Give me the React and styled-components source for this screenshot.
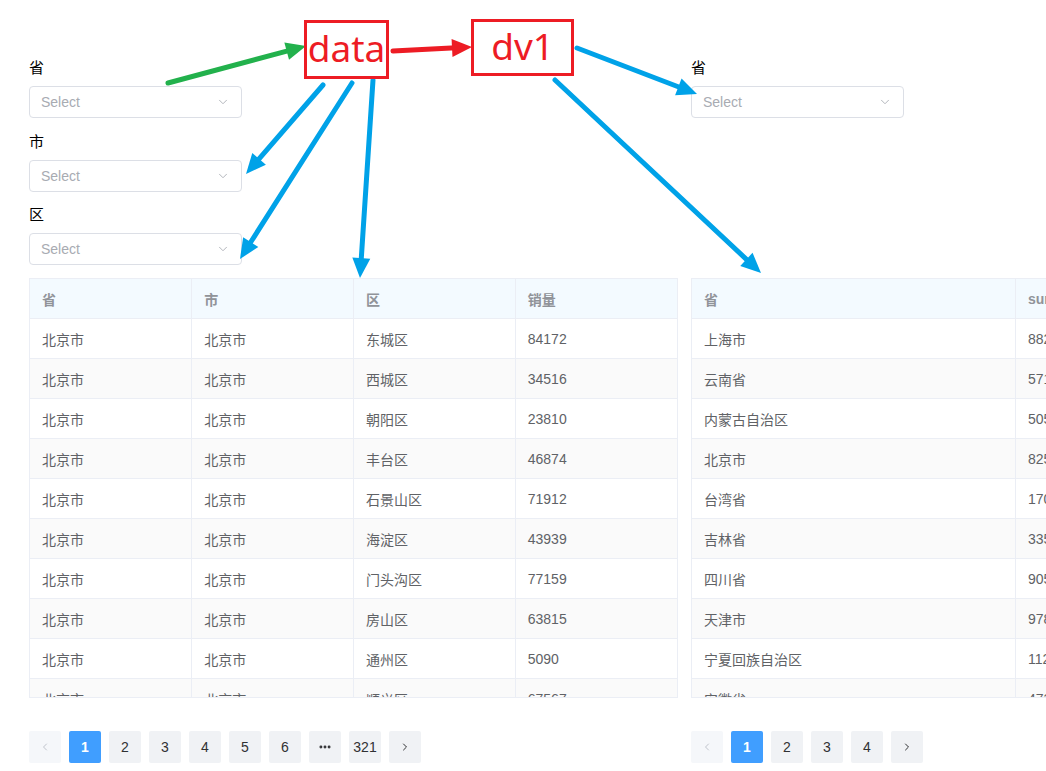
import React from 'react'
import styled, { createGlobalStyle } from 'styled-components'
import { ChevronDown, ChevronLeft, ChevronRight, Ellipsis } from 'lucide-react'

const GlobalStyle = createGlobalStyle`
    html, body {
        margin: 0;
        padding: 0;
        background: #ffffff;
        overflow: hidden;
    }
    body {
        font-family: "Liberation Sans", "Noto Sans CJK SC", sans-serif;
        font-size: 14px;
        color: #606266;
    }
`;

const Wrapper = styled.div`
    position: relative;
    width: 1046px;
    height: 771px;
    overflow: hidden;
`;

const Page = styled.div`
    display: grid;
    grid-template-columns: 649px 649px;
    column-gap: 13px;
    padding: 56px 0 0 29px;
`;

const Filters = styled.div`
    display: flex;
    flex-direction: column;
    gap: 11.5px;
    margin-bottom: 13px;
`;

const FormItem = styled.div`
    display: flex;
    flex-direction: column;
`;

const Label = styled.label`
    font-family: "Noto Sans CJK SC", sans-serif;
    font-size: 15px;
    line-height: 22px;
    color: #000000;
    margin-bottom: 8px;
`;

const SelectBox = styled.div`
    box-sizing: border-box;
    width: 213px;
    height: 32px;
    border: 1px solid #dcdfe6;
    border-radius: 4px;
    padding: 0 11px;
    display: flex;
    align-items: center;
    justify-content: space-between;
    color: #a8abb2;
    font-size: 14px;
`;

const TableBox = styled.div`
    box-sizing: border-box;
    height: 420px;
    border: 1px solid #ebeef5;
    overflow: hidden;
`;

const Table = styled.table`
    width: 100%;
    border-collapse: collapse;
    table-layout: fixed;
`;

const Th = styled.th`
    height: 39px;
    padding: 0 12px;
    text-align: left;
    background: #f3faff;
    color: #909399;
    font-weight: 700;
    font-size: 14px;
    border-bottom: 1px solid #ebeef5;
    border-right: 1px solid #ebeef5;
    &:last-child { border-right: none; }
`;

const Td = styled.td`
    height: 39px;
    padding: 0 12px;
    color: #606266;
    font-size: 14px;
    border-bottom: 1px solid #ebeef5;
    border-right: 1px solid #ebeef5;
    white-space: nowrap;
    overflow: hidden;
    &:last-child { border-right: none; }
`;

const Tr = styled.tr`
    background: ${({ $striped }) => ($striped ? '#fafafa' : '#ffffff')};
`;

const Pager = styled.div`
    display: flex;
    gap: 8px;
    margin-top: 33px;
`;

const PageBtn = styled.button`
    width: 32px;
    height: 32px;
    padding: 0;
    border: none;
    border-radius: 2px;
    display: flex;
    align-items: center;
    justify-content: center;
    font-family: "Liberation Sans", sans-serif;
    font-size: 14px;
    background: ${({ $active, disabled }) => ($active ? '#409eff' : disabled ? '#f5f7fa' : '#f0f2f5')};
    color: ${({ $active, disabled }) => ($active ? '#ffffff' : disabled ? '#c0c4cc' : '#303133')};
    font-weight: ${({ $active }) => ($active ? 700 : 400)};
`;

const Overlay = styled.svg`
    position: absolute;
    top: 0;
    left: 0;
    pointer-events: none;
`;

const NoteBox = styled.div`
    position: absolute;
    box-sizing: border-box;
    left: ${({ $x }) => $x}px;
    top: ${({ $y }) => $y}px;
    width: ${({ $w }) => $w}px;
    height: ${({ $h }) => $h}px;
    border: 3px solid #ed1c24;
    background: #ffffff;
    color: #ed1c24;
    font-family: "Noto Sans", sans-serif;
    font-size: 37px;
    line-height: 1;
    display: flex;
    align-items: center;
    justify-content: center;
    padding-bottom: 4px;
`;

const districtRows = [
    ['北京市', '北京市', '东城区', '84172'],
    ['北京市', '北京市', '西城区', '34516'],
    ['北京市', '北京市', '朝阳区', '23810'],
    ['北京市', '北京市', '丰台区', '46874'],
    ['北京市', '北京市', '石景山区', '71912'],
    ['北京市', '北京市', '海淀区', '43939'],
    ['北京市', '北京市', '门头沟区', '77159'],
    ['北京市', '北京市', '房山区', '63815'],
    ['北京市', '北京市', '通州区', '5090'],
    ['北京市', '北京市', '顺义区', '67567'],
];

const provinceRows = [
    ['上海市', '88213'],
    ['云南省', '57108'],
    ['内蒙古自治区', '50542'],
    ['北京市', '82571'],
    ['台湾省', '17039'],
    ['吉林省', '33590'],
    ['四川省', '90512'],
    ['天津市', '97845'],
    ['宁夏回族自治区', '11236'],
    ['安徽省', '47321'],
];

const Select = ({ label }) => (
    <FormItem>
        <Label>{label}</Label>
        <SelectBox>
            <span>Select</span>
            <ChevronDown size={14} strokeWidth={1.5} color="#a8abb2" />
        </SelectBox>
    </FormItem>
);

const DataTable = ({ columns, rows }) => (
    <TableBox>
        <Table>
            <thead>
                <tr>{columns.map((c) => <Th key={c}>{c}</Th>)}</tr>
            </thead>
            <tbody>
                {rows.map((r, i) => (
                    <Tr key={i} $striped={i % 2 === 1}>
                        {r.map((v, j) => <Td key={j}>{v}</Td>)}
                    </Tr>
                ))}
            </tbody>
        </Table>
    </TableBox>
);

const Pagination = ({ pages }) => (
    <Pager>
        <PageBtn disabled><ChevronLeft size={12} /></PageBtn>
        {pages.map((p, i) =>
            p === '...' ? (
                <PageBtn key={i}><Ellipsis size={14} strokeWidth={3} /></PageBtn>
            ) : (
                <PageBtn key={i} $active={p === '1'}>{p}</PageBtn>
            )
        )}
        <PageBtn><ChevronRight size={12} /></PageBtn>
    </Pager>
);

const Arrow = ({ x1, y1, x2, y2, color }) => {
    const a = Math.atan2(y2 - y1, x2 - x1);
    const len = 20;
    const half = 9;
    const bx = x2 - len * Math.cos(a);
    const by = y2 - len * Math.sin(a);
    const lx = bx + half * Math.sin(a);
    const ly = by - half * Math.cos(a);
    const rx = bx - half * Math.sin(a);
    const ry = by + half * Math.cos(a);
    const ex = x2 - (len - 4) * Math.cos(a);
    const ey = y2 - (len - 4) * Math.sin(a);
    return (
        <g>
            <line x1={x1} y1={y1} x2={ex} y2={ey} stroke={color} strokeWidth={5} strokeLinecap="round" />
            <polygon points={`${x2},${y2} ${lx},${ly} ${rx},${ry}`} fill={color} />
        </g>
    );
};

const GREEN = '#22b14c';
const RED = '#ed1c24';
const BLUE = '#00a2e8';

const App = () => (
    <Wrapper>
        <GlobalStyle />
        <Page>
            <Filters>
                <Select label="省" />
                <Select label="市" />
                <Select label="区" />
            </Filters>
            <Filters>
                <Select label="省" />
            </Filters>
            <DataTable columns={['省', '市', '区', '销量']} rows={districtRows} />
            <DataTable columns={['省', 'sum']} rows={provinceRows} />
            <Pagination pages={['1', '2', '3', '4', '5', '6', '...', '321']} />
            <Pagination pages={['1', '2', '3', '4']} />
        </Page>

        <Overlay width="1046" height="771" viewBox="0 0 1046 771">
            <Arrow x1={168} y1={83} x2={306} y2={46} color={GREEN} />
            <Arrow x1={393} y1={51} x2={472} y2={47} color={RED} />
            <Arrow x1={323} y1={85} x2={246} y2={174} color={BLUE} />
            <Arrow x1={352} y1={83} x2={240} y2={259} color={BLUE} />
            <Arrow x1={373} y1={80} x2={360} y2={278} color={BLUE} />
            <Arrow x1={577} y1={48} x2={697} y2={94} color={BLUE} />
            <Arrow x1={555} y1={80} x2={761} y2={273} color={BLUE} />
        </Overlay>
        <NoteBox $x={304} $y={20} $w={85} $h={59}>data</NoteBox>
        <NoteBox $x={471} $y={19} $w={103} $h={57}>dv1</NoteBox>
    </Wrapper>
);

export default App
